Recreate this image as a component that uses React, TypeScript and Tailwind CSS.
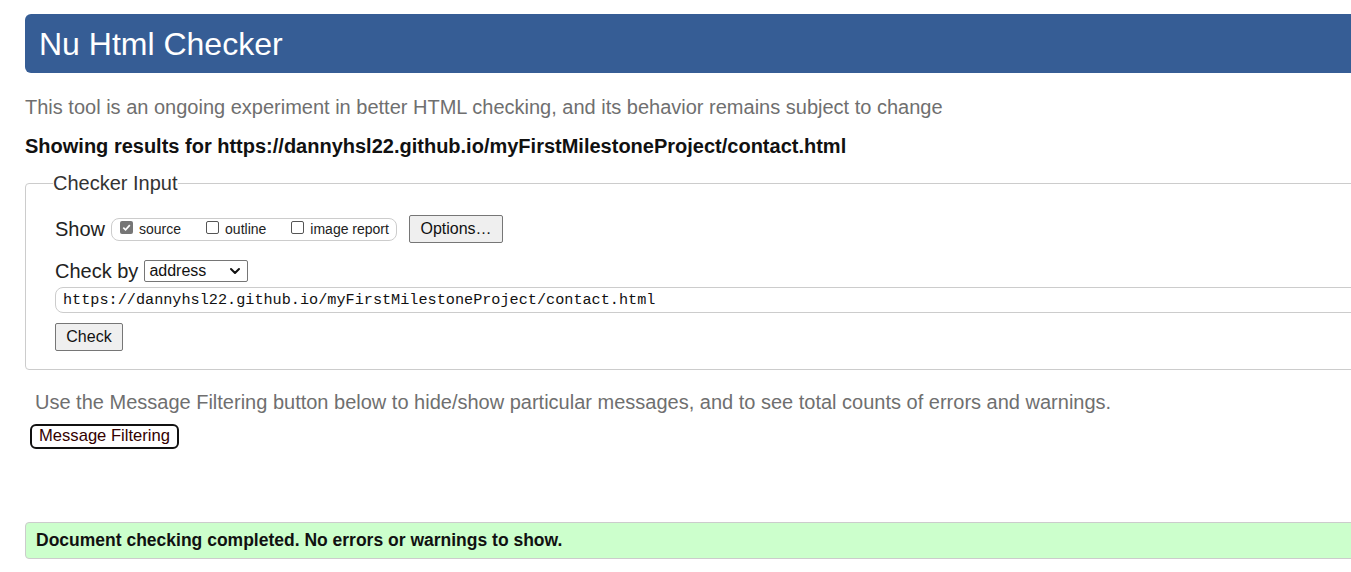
import { ChevronDown } from "lucide-react";

const Box = ({ checked }: { checked?: boolean }) =>
  checked ? (
    <span className="flex h-[13px] w-[13px] items-center justify-center rounded-[2px] bg-[#767676]">
      <svg viewBox="0 0 12 12" className="h-[11px] w-[11px]" fill="none">
        <path d="M2.5 6.2 5 8.6 9.6 3.4" stroke="white" strokeWidth="1.8" />
      </svg>
    </span>
  ) : (
    <span className="block h-[13px] w-[13px] rounded-[2px] border border-[#555] bg-white" />
  );

export default function App() {
  return (
    <div className="h-[572px] w-[1351px] overflow-hidden bg-white font-['Liberation_Sans',Arial,sans-serif] text-[#222]">
      <div className="ml-[25px] w-[1400px] pt-[14px]">
        <header className="flex h-[59px] items-center rounded-l-md bg-[#365d95] pl-[14px]">
          <h1 className="text-[32px] leading-none text-white">Nu Html Checker</h1>
        </header>

        <p className="mt-[22px] text-[20px] leading-[24px] text-[#6f6f6f]">
          This tool is an ongoing experiment in better HTML checking, and its behavior remains subject to change
        </p>
        <p className="mt-[15px] text-[20px] font-bold leading-[24px] text-[#111]">
          Showing results for https://dannyhsl22.github.io/myFirstMilestoneProject/contact.html
        </p>

        <fieldset className="mt-[13px] h-[199px] rounded border border-[#ccc] px-[29px]">
          <legend className="-ml-[2px] text-[20px] leading-[24px] text-[#333]">Checker Input</legend>

          <div className="mt-[20px] flex items-center text-[#222]">
            <span className="text-[20px] leading-[24px]">Show</span>
            <div className="ml-[6px] flex h-[23px] w-[286px] items-center rounded-[8px] border border-[#ccc] pl-[8px] text-[14px]">
              <span className="mb-[4px]"><Box checked /></span>
              <span className="ml-[6px]">source</span>
              <span className="mb-[4px] ml-[25px]"><Box /></span>
              <span className="ml-[6px]">outline</span>
              <span className="mb-[4px] ml-[25px]"><Box /></span>
              <span className="ml-[6px]">image report</span>
            </div>
            <button className="ml-[12px] h-[28px] w-[94px] rounded-[2px] border border-[#767676] bg-[#efefef] text-[16px] text-[#111]">
              Options…
            </button>
          </div>

          <div className="mt-[16px] flex items-center">
            <span className="text-[20px] leading-[24px]">Check by</span>
            <div className="ml-[6px] flex h-[22px] w-[104px] items-center justify-between rounded-[2px] border border-[#767676] pl-[4px] pr-[4px] text-[16px] text-[#111]">
              <span>address</span>
              <ChevronDown className="h-[16px] w-[16px]" strokeWidth={3} />
            </div>
          </div>

          <div className="mt-[4px] flex h-[26px] items-center rounded-[8px] border border-[#ccc] pl-[7px] font-['Liberation_Mono',monospace] text-[15.2px] text-[#111]">
            https://dannyhsl22.github.io/myFirstMilestoneProject/contact.html
          </div>

          <button className="mt-[10px] h-[28px] w-[68px] rounded-[2px] border border-[#767676] bg-[#efefef] text-[16px] text-[#111]">
            Check
          </button>
        </fieldset>

        <p className="ml-[10px] mt-[20px] text-[20px] leading-[24px] text-[#6f6f6f]">
          Use the Message Filtering button below to hide/show particular messages, and to see total counts of errors and warnings.
        </p>
        <button className="ml-[5px] mt-[10px] h-[25px] w-[149px] rounded-[6px] border-2 border-[#111] text-[16.6px] leading-none text-[#300]">
          Message Filtering
        </button>

        <div className="mt-[73px] flex h-[37px] items-center rounded-l border border-[#ccc] bg-[#ccffcc] pl-[10px] text-[17.5px] font-bold text-[#111]">
          Document checking completed. No errors or warnings to show.
        </div>
      </div>
    </div>
  );
}
